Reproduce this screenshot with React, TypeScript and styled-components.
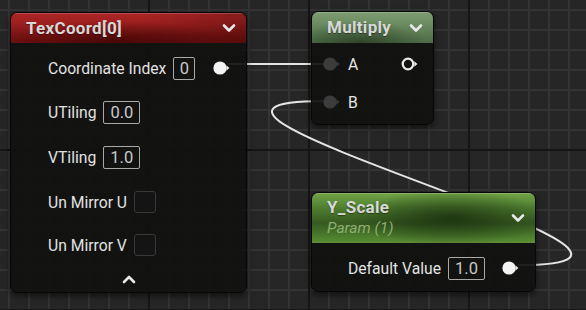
import React from "react";
import styled, { createGlobalStyle } from "styled-components";

const Global = createGlobalStyle`
  html, body { margin: 0; padding: 0; background: #262626; }
  body { font-family: Roboto, "Liberation Sans", sans-serif; }
`;

const Canvas = styled.div`
  position: relative;
  width: 586px;
  height: 310px;
  overflow: hidden;
  background-color: #262626;
  background-image:
    linear-gradient(90deg, #151515 0 2px, transparent 2px),
    linear-gradient(180deg, #151515 0 2px, transparent 2px),
    linear-gradient(90deg, #333333 0 2px, transparent 2px),
    linear-gradient(180deg, #333333 0 2px, transparent 2px);
  background-size: 160px 160px, 160px 160px, 20px 20px, 20px 20px;
  background-position: 148px 0, 0 149px, 8px 0, 0 9px;
`;

const Wires = styled.svg`
  position: absolute;
  left: 0;
  top: 0;
  width: 586px;
  height: 310px;
`;

const Node = styled.div<{ $x: number; $y: number; $w: number }>`
  position: absolute;
  left: ${(p) => p.$x}px;
  top: ${(p) => p.$y}px;
  width: ${(p) => p.$w}px;
  box-sizing: border-box;
  border: 1px solid #070707;
  border-radius: 7px;
  background: rgba(17, 18, 16, 0.93);
  box-shadow: 0 3px 6px rgba(0, 0, 0, 0.55);
  overflow: hidden;
  display: flex;
  flex-direction: column;
`;

const Header = styled.div<{ $h: number; $bg: string }>`
  height: ${(p) => p.$h}px;
  box-sizing: border-box;
  background: ${(p) => p.$bg};
  box-shadow: inset 0 1px 0 rgba(255, 255, 255, 0.18);
  display: flex;
  align-items: center;
  padding: 0 10px 0 15px;
  position: relative;
`;

const TitleBlock = styled.div`
  flex: 1;
  display: flex;
  flex-direction: column;
  justify-content: center;
`;

const Title = styled.div`
  font-weight: 700;
  font-size: 17px;
  letter-spacing: 0.3px;
  color: #d8d8d8;
  line-height: 19px;
  text-shadow: 0 1px 1px rgba(0, 0, 0, 0.4);
`;

const Subtitle = styled.div`
  font-style: italic;
  font-size: 15.5px;
  color: #8fae72;
  line-height: 19px;
  margin-top: 2px;
`;

const Body = styled.div<{ $pt: number; $pl: number; $pr: number; $pb: number }>`
  display: flex;
  flex-direction: column;
  padding: ${(p) => `${p.$pt}px ${p.$pr}px ${p.$pb}px ${p.$pl}px`};
`;

const Row = styled.div<{ $h: number }>`
  height: ${(p) => p.$h}px;
  display: flex;
  align-items: center;
  gap: 7px;
`;

const Label = styled.span`
  font-size: 15.7px;
  color: #e2e2e2;
  white-space: nowrap;
`;

const ValueBox = styled.div<{ $w: number }>`
  width: ${(p) => p.$w}px;
  height: 23px;
  box-sizing: border-box;
  border: 1px solid #a9a9a9;
  border-radius: 2px;
  display: flex;
  align-items: center;
  justify-content: center;
  font-size: 16.5px;
  color: #c9c9c9;
`;

const Check = styled.div`
  width: 22px;
  height: 22px;
  box-sizing: border-box;
  border: 1px solid #383838;
  border-radius: 3px;
  background: #141414;
`;

const Spacer = styled.div`
  flex: 1;
`;

const FooterRow = styled.div`
  height: 26px;
  display: flex;
  align-items: center;
  justify-content: center;
`;

const PinLabel = styled.span`
  font-size: 15.7px;
  color: #e6e6e6;
`;

const Chevron = ({ up }: { up?: boolean }) => (
  <svg width="14" height="10" viewBox="0 0 14 10">
    <polyline
      points={up ? "2,8 7,3 12,8" : "2,2.5 7,7.5 12,2.5"}
      fill="none"
      stroke="#e8e8e8"
      strokeWidth="2.6"
      strokeLinecap="round"
      strokeLinejoin="round"
    />
  </svg>
);

const Pin = ({ kind }: { kind: "white" | "grey" | "ring" }) => {
  const fill = kind === "white" ? "#f4f4f4" : kind === "grey" ? "#3c3c3c" : "none";
  const tri = kind === "grey" ? "#3c3c3c" : "#e8e8e8";
  return (
    <svg width="18" height="14" viewBox="0 0 18 14">
      {kind === "ring" ? (
        <circle cx="7" cy="7" r="5.3" fill="none" stroke="#e8e8e8" strokeWidth="2.3" />
      ) : (
        <circle cx="7" cy="7" r="6.6" fill={fill} />
      )}
      <polygon points="13.3,4.2 16.5,7 13.3,9.8" fill={tri} />
    </svg>
  );
};

const redHeader =
  "radial-gradient(ellipse 45% 70% at 45% 95%, rgba(45,0,0,0.55), rgba(45,0,0,0) 100%), linear-gradient(90deg, rgba(0,0,0,0) 0%, rgba(0,0,0,0) 55%, rgba(30,0,0,0.25) 100%), linear-gradient(180deg, #ad2626 0%, #9e1f1f 35%, #781313 75%, #6a0e0e 100%)";
const greyGreenHeader =
  "radial-gradient(ellipse 55% 70% at 40% 100%, rgba(20,35,18,0.55), rgba(20,35,18,0) 100%), linear-gradient(180deg, #7d9c72 0%, #6a8b60 40%, #4d6c46 100%)";
const greenHeader =
  "radial-gradient(ellipse 45% 55% at 62% 50%, rgba(18,35,10,0.7), rgba(18,35,10,0) 100%), linear-gradient(180deg, #72a548 0%, #4f7e2f 30%, #365a20 60%, #4a7a2b 85%, #5b8f35 100%)";

export default function App() {
  return (
    <>
      <Global />
      <Canvas>
        <Wires viewBox="0 0 586 310">
          <path d="M 228 64 L 324 64" stroke="#e4e4e4" strokeWidth="2" fill="none" />
          <path
            d="M 518 265 C 760 265, 85 101, 324 101"
            stroke="#e4e4e4"
            strokeWidth="2"
            fill="none"
          />
        </Wires>

        <Node $x={10} $y={12} $w={237}>
          <Header $h={30} $bg={redHeader}>
            <TitleBlock>
              <Title>TexCoord[0]</Title>
            </TitleBlock>
            <Chevron />
          </Header>
          <Body $pt={3} $pl={37} $pr={15} $pb={0}>
            <Row $h={44}>
              <Label>Coordinate Index</Label>
              <ValueBox $w={22}>0</ValueBox>
              <Spacer />
              <Pin kind="white" />
            </Row>
            <Row $h={45}>
              <Label>UTiling</Label>
              <ValueBox $w={37}>0.0</ValueBox>
            </Row>
            <Row $h={45}>
              <Label>VTiling</Label>
              <ValueBox $w={37}>1.0</ValueBox>
            </Row>
            <Row $h={44}>
              <Label>Un Mirror U</Label>
              <Check />
            </Row>
            <Row $h={42}>
              <Label>Un Mirror V</Label>
              <Check />
            </Row>
          </Body>
          <FooterRow>
            <Chevron up />
          </FooterRow>
        </Node>

        <Node $x={311} $y={11} $w={123}>
          <Header $h={31} $bg={greyGreenHeader}>
            <TitleBlock>
              <Title>Multiply</Title>
            </TitleBlock>
            <Chevron />
          </Header>
          <Body $pt={2} $pl={11} $pr={14} $pb={3}>
            <Row $h={38}>
              <Pin kind="grey" />
              <PinLabel>A</PinLabel>
              <Spacer />
              <Pin kind="ring" />
            </Row>
            <Row $h={38}>
              <Pin kind="grey" />
              <PinLabel>B</PinLabel>
            </Row>
          </Body>
        </Node>

        <Node $x={311} $y={192} $w={225}>
          <Header $h={50} $bg={greenHeader}>
            <TitleBlock>
              <Title>Y_Scale</Title>
              <Subtitle>Param (1)</Subtitle>
            </TitleBlock>
            <Chevron />
          </Header>
          <Body $pt={6} $pl={36} $pr={15} $pb={4}>
            <Row $h={38}>
              <Label>Default Value</Label>
              <ValueBox $w={37}>1.0</ValueBox>
              <Spacer />
              <Pin kind="white" />
            </Row>
          </Body>
        </Node>
      </Canvas>
    </>
  );
}
